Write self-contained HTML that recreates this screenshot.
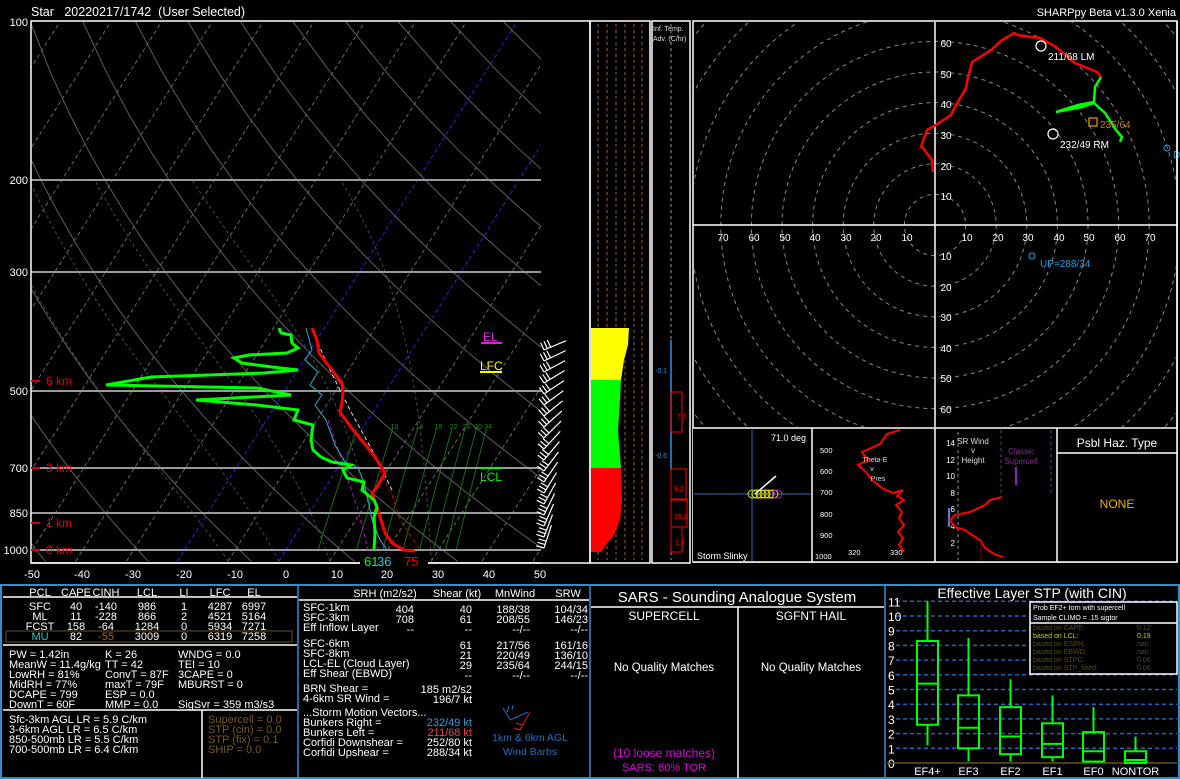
<!DOCTYPE html>
<html><head><meta charset="utf-8">
<style>
html,body{margin:0;padding:0;background:#000;width:1180px;height:779px;overflow:hidden}
svg{display:block}
text{font-family:"Liberation Sans",sans-serif}
</style></head><body>
<svg id="s" width="1180" height="779" viewBox="0 0 1180 779" xmlns="http://www.w3.org/2000/svg">
<rect width="1180" height="779" fill="#000"/>
<defs>
<clipPath id="skc"><rect x="31" y="21" width="510" height="542"/></clipPath>
<clipPath id="hc"><rect x="694" y="22" width="482" height="405"/></clipPath>
</defs>
<text x="31" y="16" fill="#fff" font-size="12.5">Star&#160;&#160; 20220217/1742&#160; (User Selected)</text>
<text x="1176" y="16" fill="#fff" font-size="11" text-anchor="end">SHARPpy Beta v1.3.0 Xenia</text>

<g id="skgrid" clip-path="url(#skc)"></g>
<g stroke="#9a9a9a" stroke-width="2">
<line x1="31" y1="180" x2="541" y2="180"/><line x1="31" y1="272" x2="541" y2="272"/>
<line x1="31" y1="391" x2="541" y2="391"/><line x1="31" y1="468" x2="541" y2="468"/>
<line x1="31" y1="513" x2="541" y2="513"/><line x1="31" y1="550" x2="541" y2="550"/>
</g>
<rect x="31" y="21" width="559" height="542" fill="none" stroke="#fff" stroke-width="1.5"/>
<g fill="#fff" font-size="11" text-anchor="end">
<text x="28" y="26">100</text><text x="28" y="184">200</text><text x="28" y="276">300</text>
<text x="28" y="395">500</text><text x="28" y="472">700</text><text x="28" y="517">850</text><text x="28" y="554">1000</text>
</g>
<g fill="#e00" font-size="12">
<line x1="31" y1="381" x2="40" y2="381" stroke="#c00" stroke-width="2"/><text x="46" y="385">6 km</text>
<line x1="31" y1="468" x2="40" y2="468" stroke="#c00" stroke-width="2"/><text x="46" y="472">3 km</text>
<line x1="31" y1="523" x2="40" y2="523" stroke="#c00" stroke-width="2"/><text x="46" y="527">1 km</text>
<line x1="31" y1="550" x2="40" y2="550" stroke="#c00" stroke-width="2"/><text x="46" y="554">0 km</text>
</g>
<g fill="#fff" font-size="11" text-anchor="middle">
<text x="32" y="578">-50</text><text x="82" y="578">-40</text><text x="133" y="578">-30</text><text x="184" y="578">-20</text>
<text x="235" y="578">-10</text><text x="286" y="578">0</text><text x="337" y="578">10</text><text x="387" y="578">20</text>
<text x="438" y="578">30</text><text x="489" y="578">40</text><text x="540" y="578">50</text>
</g>
<g clip-path="url(#skc)">
<polyline fill="none" stroke="#d000d0" stroke-width="1" stroke-dasharray="4,3" points="328,420 345,470 358,510 368,550"/>
<polyline fill="none" stroke="#ddd" stroke-width="1" stroke-dasharray="4,3" points="312,330 330,370 350,410 372,450 392,490"/>
<polyline fill="none" stroke="#c00" stroke-width="1" stroke-dasharray="4,3" points="380,470 392,495 400,520 420,550"/>
<polyline fill="none" stroke="#22b5cc" stroke-width="1" points="306,328 312,350 305,360 318,372 310,385 322,395 315,405 326,420 335,445 345,462 358,468 363,480 368,500 372,520 380,540 387,550"/>
<polyline fill="none" stroke="#f00" stroke-width="3" points="312,328 317,340 319,353 332,370 342,383 343,393 342,403 340,412 353,430 364,443 375,457 385,473 377,487 372,493 377,507 381,520 385,533 392,543 404,550 415,551"/>
<polyline fill="none" stroke="#0f0" stroke-width="3" points="279,328 281,333 291,335 292,343 298,348 287,353 249,355 234,358 242,363 272,367 298,370 264,373 151,377 106,385 257,388 291,395 196,400 257,405 298,410 294,420 313,425 311,440 313,450 321,457 332,462 351,465 343,470 347,478 364,482 362,490 374,500 377,507 374,517 375,533 374,550"/>
</g>
<line x1="31" y1="563" x2="541" y2="563" stroke="#fff" stroke-width="1.5"/>
<rect x="360" y="553" width="68" height="14" fill="#000"/>
<text x="364" y="566" fill="#0f0" font-size="13">61</text><text x="377" y="566" fill="#22c8d8" font-size="13">36</text><text x="404" y="566" fill="#f00" font-size="13">75</text>
<g font-size="12"><text x="483" y="341" fill="#e020e0">EL</text><line x1="481" y1="343" x2="502" y2="343" stroke="#e020e0" stroke-width="2"/>
<text x="480" y="370" fill="#ff0">LFC</text><line x1="480" y1="372" x2="502" y2="372" stroke="#ff0" stroke-width="2"/>
<line x1="480" y1="468" x2="502" y2="468" stroke="#0f0" stroke-width="2"/><text x="480" y="481" fill="#0f0">LCL</text></g>
<g id="barbs" stroke="#fff" stroke-width="1.2" fill="none"></g>

<rect x="590" y="21" width="60" height="542" fill="none" stroke="#fff" stroke-width="1.5"/>
<g stroke="#6a4020" stroke-width="1.5" stroke-dasharray="3,3">
<line x1="598" y1="24" x2="598" y2="560"/><line x1="607" y1="24" x2="607" y2="560"/><line x1="616" y1="24" x2="616" y2="560"/>
<line x1="625" y1="24" x2="625" y2="560"/><line x1="634" y1="24" x2="634" y2="560"/><line x1="642" y1="24" x2="642" y2="560"/>
</g>
<polygon fill="#ff0" points="591,328 629,328 628,345 624,360 621,380 591,380"/>
<polygon fill="#0f0" points="591,380 621,380 620,400 618,430 621,468 591,468"/>
<polygon fill="#f00" points="591,468 621,468 622,500 620,520 614,535 606,545 601,552 591,552"/>
<rect x="652" y="21" width="38" height="542" fill="none" stroke="#fff" stroke-width="1.5"/>
<text x="653" y="31" fill="#ddd" font-size="7">Inf. Temp.</text><text x="653" y="41" fill="#ddd" font-size="7">Adv. (C/hr)</text>
<line x1="671" y1="24" x2="671" y2="560" stroke="#999" stroke-dasharray="3,3"/>
<line x1="671" y1="340" x2="671" y2="470" stroke="#3090e0" stroke-width="1.5"/>
<text x="655" y="373" fill="#3090e0" font-size="7">-0.1</text><text x="655" y="458" fill="#3090e0" font-size="7">-0.6</text>
<g stroke="#f00" fill="none"><rect x="671" y="392" width="11" height="40"/><rect x="671" y="469" width="15" height="30"/><rect x="671" y="500" width="16" height="27"/><rect x="671" y="527" width="11" height="25"/></g>
<g fill="#f00" font-size="7"><text x="677" y="419">7.0</text><text x="674" y="491">9.2</text><text x="674" y="519">15.2</text><text x="675" y="545">3.7</text></g>

<rect x="693" y="21" width="484" height="541" fill="none" stroke="#fff" stroke-width="1.5"/>
<g id="rings" clip-path="url(#hc)" fill="none" stroke="#888" stroke-dasharray="4,4"></g>
<line x1="935" y1="22" x2="935" y2="427" stroke="#fff" stroke-width="1.5"/>
<line x1="693" y1="225" x2="1177" y2="225" stroke="#fff" stroke-width="1.5"/>
<g fill="#fff" font-size="10" text-anchor="middle">
<text x="946" y="47">60</text><text x="946" y="78">50</text><text x="946" y="108">40</text><text x="946" y="139">30</text><text x="946" y="170">20</text><text x="946" y="200">10</text>
<text x="946" y="260">10</text><text x="946" y="291">20</text><text x="946" y="321">30</text><text x="946" y="352">40</text><text x="946" y="382">50</text><text x="946" y="413">60</text>
<text x="723" y="241">70</text><text x="754" y="241">60</text><text x="785" y="241">50</text><text x="815" y="241">40</text><text x="846" y="241">30</text><text x="876" y="241">20</text><text x="907" y="241">10</text>
<text x="967" y="241">10</text><text x="998" y="241">20</text><text x="1028" y="241">30</text><text x="1059" y="241">40</text><text x="1089" y="241">50</text><text x="1120" y="241">60</text><text x="1150" y="241">70</text>
</g>
<polyline fill="none" stroke="#f00" stroke-width="2.5" points="933,172 932,160 923,148 921,147 927,130 934,126 951,115 955,107 966,88 968,77 972,62 991,50 1002,40 1014,33 1018,35 1031,37 1040,38 1056,47 1075,63 1097,72 1101,77"/>
<polyline fill="none" stroke="#0f0" stroke-width="2.5" points="1101,77 1095,87 1094,102 1078,105 1056,112 1082,107 1094,103 1105,113 1116,130 1122,137 1120,142"/>
<circle cx="1041" cy="46" r="5" fill="none" stroke="#fff" stroke-width="1.2"/><text x="1048" y="60" fill="#fff" font-size="10">211/68 LM</text>
<circle cx="1053" cy="134" r="5" fill="none" stroke="#fff" stroke-width="1.2"/><text x="1060" y="148" fill="#fff" font-size="10">232/49 RM</text>
<rect x="1089" y="118" width="8" height="8" fill="none" stroke="#c08010" stroke-width="1.5"/><text x="1100" y="128" fill="#c08010" font-size="10">235/64</text>
<circle cx="1167" cy="148" r="3" fill="none" stroke="#1ea0e0"/><text x="1173" y="158" fill="#1ea0e0" font-size="10">D</text>
<circle cx="1032" cy="256" r="3" fill="none" stroke="#1ea0e0"/><text x="1040" y="267" fill="#1ea0e0" font-size="10">UP=288/34</text>

<rect x="693" y="428" width="484" height="134" fill="#000"/>
<line x1="693" y1="428" x2="1177" y2="428" stroke="#fff" stroke-width="1.5"/>
<line x1="812" y1="428" x2="812" y2="562" stroke="#fff" stroke-width="1.5"/>
<line x1="935" y1="428" x2="935" y2="562" stroke="#fff" stroke-width="1.5"/>
<line x1="1057" y1="428" x2="1057" y2="562" stroke="#fff" stroke-width="1.5"/>
<line x1="1057" y1="453" x2="1177" y2="453" stroke="#fff" stroke-width="1.5"/>
<line x1="1177" y1="21" x2="1177" y2="562" stroke="#fff" stroke-width="1.5"/>
<line x1="693" y1="562" x2="1177" y2="562" stroke="#fff" stroke-width="1.5"/>
<line x1="752" y1="430" x2="752" y2="561" stroke="#1a4a80" stroke-width="1.5"/>
<line x1="694" y1="494" x2="811" y2="494" stroke="#1a4a80" stroke-width="1.5"/>
<text x="806" y="441" fill="#fff" font-size="9" text-anchor="end">71.0 deg</text>
<g fill="none" stroke="#dd0" stroke-width="1"><ellipse cx="753" cy="494" rx="5" ry="4"/><ellipse cx="757" cy="494" rx="5" ry="4"/><ellipse cx="761" cy="494" rx="5" ry="4"/><ellipse cx="765" cy="494" rx="5" ry="4"/><ellipse cx="769" cy="494" rx="5" ry="4"/><ellipse cx="773" cy="494" rx="5" ry="4"/></g>
<ellipse cx="777" cy="494" rx="5" ry="4" fill="none" stroke="#b020d0"/>
<line x1="755" y1="494" x2="776" y2="476" stroke="#fff" stroke-width="1.5"/>
<text x="697" y="559" fill="#fff" font-size="9">Storm Slinky</text>
<g fill="#fff" font-size="7.5"><text x="820" y="453">500</text><text x="820" y="474">600</text><text x="820" y="495">700</text><text x="820" y="517">800</text><text x="820" y="538">900</text><text x="815" y="559">1000</text>
<text x="848" y="555">320</text><text x="890" y="555">330</text></g>
<polyline fill="none" stroke="#f00" stroke-width="2" points="900,430 887,434 880,444 862,452 868,460 858,465 866,472 872,480 882,488 893,493 903,490 897,496 904,500 896,505 902,512 899,518 904,525 898,532 903,538 899,545 904,552"/>
<g fill="#ddd" font-size="7" text-anchor="middle"><text x="875" y="462">Theta-E</text><text x="872" y="471">v</text><text x="878" y="481">Pres</text></g>
<line x1="958" y1="432" x2="958" y2="560" stroke="#999" stroke-dasharray="3,3"/>
<g fill="#fff" font-size="8" text-anchor="end"><text x="955" y="446">14</text><text x="955" y="463">12</text><text x="955" y="479">10</text><text x="955" y="496">8</text><text x="955" y="512">6</text><text x="955" y="529">4</text><text x="955" y="546">2</text></g>
<g fill="#ddd" font-size="8" text-anchor="middle"><text x="973" y="444">SR Wind</text><text x="973" y="453">v</text><text x="973" y="463">Height</text></g>
<g stroke="#7a2a90" stroke-dasharray="3,3"><line x1="1001" y1="430" x2="1001" y2="493"/><line x1="1051" y1="430" x2="1051" y2="493"/></g>
<text x="1021" y="454" fill="#8a2aa0" font-size="8" text-anchor="middle">Classic</text><text x="1021" y="464" fill="#8a2aa0" font-size="8" text-anchor="middle">Supercell</text>
<line x1="1016" y1="467" x2="1016" y2="485" stroke="#9020c0" stroke-width="2"/>
<line x1="949" y1="508" x2="949" y2="527" stroke="#5080e0" stroke-width="2"/>
<polyline fill="none" stroke="#f00" stroke-width="2" points="1002,497 990,500 985,505 970,512 955,515 950,520 955,527 965,530 972,535 980,540 985,548 996,555 1003,557"/>
<line x1="981" y1="542" x2="981" y2="561" stroke="#800"/>
<text x="1117" y="447" fill="#fff" font-size="12" text-anchor="middle">Psbl Haz. Type</text>
<text x="1117" y="508" fill="#f0b000" font-size="12" text-anchor="middle">NONE</text>

<rect x="1" y="585" width="1178" height="193" fill="#000" stroke="#2f8fcc" stroke-width="2"/>
<line x1="298" y1="586" x2="298" y2="778" stroke="#2f8fcc" stroke-width="1.5"/>
<line x1="590" y1="586" x2="590" y2="778" stroke="#2f8fcc" stroke-width="1.5"/>
<line x1="885" y1="586" x2="885" y2="778" stroke="#2f8fcc" stroke-width="1.5"/>
<g stroke="#fff" stroke-width="1.5">
<line x1="3" y1="597" x2="297" y2="597"/><line x1="3" y1="645" x2="297" y2="645"/><line x1="3" y1="710" x2="297" y2="710"/>
<line x1="202" y1="710" x2="202" y2="778"/><line x1="299" y1="600" x2="589" y2="600"/>
<line x1="591" y1="607" x2="884" y2="607"/><line x1="738" y1="607" x2="738" y2="778"/>
</g>
<g fill="#fff" font-size="11" text-anchor="middle">
<text x="40" y="596">PCL</text><text x="76" y="596">CAPE</text><text x="106" y="596">CINH</text><text x="147" y="596">LCL</text><text x="184" y="596">LI</text><text x="220" y="596">LFC</text><text x="254" y="596">EL</text>
<text x="40" y="610">SFC</text><text x="76" y="610">40</text><text x="106" y="610">-140</text><text x="147" y="610">986</text><text x="184" y="610">1</text><text x="220" y="610">4287</text><text x="254" y="610">6997</text>
<text x="40" y="620">ML</text><text x="76" y="620">11</text><text x="106" y="620">-228</text><text x="147" y="620">866</text><text x="184" y="620">2</text><text x="220" y="620">4521</text><text x="254" y="620">5164</text>
<text x="40" y="630">FCST</text><text x="76" y="630">158</text><text x="106" y="630">-64</text><text x="147" y="630">1284</text><text x="184" y="630">0</text><text x="220" y="630">5934</text><text x="254" y="630">7271</text>
<text x="40" y="640" fill="#22c8d8">MU</text><text x="76" y="640">82</text><text x="106" y="640" fill="#9a6a10">-55</text><text x="147" y="640">3009</text><text x="184" y="640">0</text><text x="220" y="640">6319</text><text x="254" y="640">7258</text>
</g>
<rect x="6" y="631" width="286" height="11" fill="none" stroke="#6a4a1a"/>
<g fill="#fff" font-size="11">
<text x="9" y="658">PW = 1.42in</text><text x="105" y="658">K = 26</text><text x="178" y="658">WNDG = 0.0</text>
<text x="9" y="668">MeanW = 11.4g/kg</text><text x="105" y="668">TT = 42</text><text x="178" y="668">TEI = 10</text>
<text x="9" y="678">LowRH = 81%</text><text x="105" y="678">ConvT = 87F</text><text x="178" y="678">3CAPE = 0</text>
<text x="9" y="688">MidRH = 77%</text><text x="105" y="688">maxT = 79F</text><text x="178" y="688">MBURST = 0</text>
<text x="9" y="698">DCAPE = 799</text><text x="105" y="698">ESP = 0.0</text>
<text x="9" y="708">DownT = 60F</text><text x="105" y="708">MMP = 0.0</text><text x="178" y="708">SigSvr = 359 m3/s3</text>
<text x="9" y="723">Sfc-3km AGL LR = 5.9 C/km</text><text x="9" y="733">3-6km AGL LR = 6.5 C/km</text>
<text x="9" y="743">850-500mb LR = 5.5 C/km</text><text x="9" y="753">700-500mb LR = 6.4 C/km</text>
</g>
<g fill="#7a5a1a" font-size="11"><text x="208" y="723">Supercell = 0.0</text><text x="208" y="733">STP (cin) = 0.0</text><text x="208" y="743">STP (fix) = 0.1</text><text x="208" y="753">SHIP = 0.0</text></g>
<g fill="#fff" font-size="11">
<text x="385" y="597" text-anchor="middle">SRH (m2/s2)</text><text x="457" y="597" text-anchor="middle">Shear (kt)</text><text x="515" y="597" text-anchor="middle">MnWind</text><text x="568" y="597" text-anchor="middle">SRW</text>
<text x="303" y="611">SFC-1km</text><text x="303" y="621">SFC-3km</text><text x="303" y="631">Eff Inflow Layer</text>
<text x="303" y="647">SFC-6km</text><text x="303" y="657">SFC-8km</text><text x="303" y="667">LCL-EL (Cloud Layer)</text><text x="303" y="677">Eff Shear (EBWD)</text>
<text x="303" y="692">BRN Shear =</text><text x="303" y="702">4-6km SR Wind =</text>
<text x="303" y="716">...Storm Motion Vectors...</text><text x="303" y="726">Bunkers Right =</text><text x="303" y="736">Bunkers Left =</text><text x="303" y="746">Corfidi Downshear =</text><text x="303" y="756">Corfidi Upshear =</text>
</g>
<g fill="#fff" font-size="11" text-anchor="end">
<text x="414" y="613">404</text><text x="472" y="613">40</text><text x="530" y="613">188/38</text><text x="588" y="613">104/34</text>
<text x="414" y="623">708</text><text x="472" y="623">61</text><text x="530" y="623">208/55</text><text x="588" y="623">146/23</text>
<text x="414" y="633">--</text><text x="472" y="633">--</text><text x="530" y="633">--/--</text><text x="588" y="633">--/--</text>
<text x="472" y="649">61</text><text x="530" y="649">217/56</text><text x="588" y="649">161/16</text>
<text x="472" y="659">21</text><text x="530" y="659">220/49</text><text x="588" y="659">136/10</text>
<text x="472" y="669">29</text><text x="530" y="669">235/64</text><text x="588" y="669">244/15</text>
<text x="472" y="679">--</text><text x="530" y="679">--/--</text><text x="588" y="679">--/--</text>
<text x="472" y="693">185 m2/s2</text><text x="472" y="703">196/7 kt</text>
<text x="472" y="726" fill="#22a0e0">232/49 kt</text><text x="472" y="736" fill="#ff4040">211/68 kt</text><text x="472" y="746">252/80 kt</text><text x="472" y="756">288/34 kt</text>
</g>
<g fill="none" stroke-width="1"><polyline points="503,708 510,720 528,712" stroke="#1e6fc0"/><line x1="507" y1="712" x2="509" y2="706" stroke="#1e6fc0"/><line x1="512" y1="710" x2="513" y2="705" stroke="#1e6fc0"/>
<polyline points="530,712 520,730" stroke="#d02020"/><line x1="520" y1="730" x2="514" y2="728" stroke="#d02020"/><line x1="522" y1="725" x2="516" y2="723" stroke="#d02020"/></g>
<text x="530" y="741" fill="#1e6fc0" font-size="10.5" text-anchor="middle">1km &amp; 6km AGL</text>
<text x="530" y="755" fill="#1e6fc0" font-size="10.5" text-anchor="middle">Wind Barbs</text>
<text x="737" y="602" fill="#fff" font-size="15" text-anchor="middle">SARS - Sounding Analogue System</text>
<text x="664" y="620" fill="#fff" font-size="12" text-anchor="middle">SUPERCELL</text><text x="811" y="620" fill="#fff" font-size="12" text-anchor="middle">SGFNT HAIL</text>
<text x="664" y="671" fill="#fff" font-size="11.5" text-anchor="middle">No Quality Matches</text><text x="811" y="671" fill="#fff" font-size="11.5" text-anchor="middle">No Quality Matches</text>
<text x="664" y="757" fill="#e000e0" font-size="12" text-anchor="middle">(10 loose matches)</text>
<text x="664" y="771" fill="#e000e0" font-size="11" text-anchor="middle">SARS: 60% TOR</text>
<text x="1032" y="598" fill="#fff" font-size="14" text-anchor="middle">Effective Layer STP (with CIN)</text>
<g id="stp"></g>
<rect x="1030" y="602" width="147" height="72" fill="#000" stroke="#fff" stroke-width="1.5"/>
<line x1="1030" y1="623" x2="1177" y2="623" stroke="#fff" stroke-width="1.5"/>
<g font-size="7"><text x="1033" y="610" fill="#fff">Prob EF2+ torn with supercell</text><text x="1033" y="620" fill="#fff">Sample CLIMO = .15 sigtor</text>
<text x="1033" y="630" fill="#5a4a1a">based on CAPE:</text><text x="1137" y="630" fill="#5a4a1a">0.12</text>
<text x="1033" y="638" fill="#d0d000">based on LCL:</text><text x="1137" y="638" fill="#d0d000">0.19</text>
<text x="1033" y="646" fill="#5a4a1a">based on ESRH:</text><text x="1137" y="646" fill="#5a4a1a">nan</text>
<text x="1033" y="654" fill="#5a4a1a">based on EBWD:</text><text x="1137" y="654" fill="#5a4a1a">nan</text>
<text x="1033" y="662" fill="#5a4a1a">based on STPC:</text><text x="1137" y="662" fill="#5a4a1a">0.06</text>
<text x="1033" y="670" fill="#5a4a1a">based on STP_fixed:</text><text x="1137" y="670" fill="#5a4a1a">0.06</text></g>
</svg>
<script>
var NS="http://www.w3.org/2000/svg";
function el(p,t,a){var e=document.createElementNS(NS,t);for(var k in a)e.setAttribute(k,a[k]);p.appendChild(e);return e;}
function Y(p){return 22+528*Math.log10(p/100);}
function X(T,p){return 286+5.08*T+0.63*(550-Y(p));}
var g=document.getElementById('skgrid');
for(var T=-160;T<=50;T+=10){var blue=(T==0||T==-20);
 el(g,'line',{x1:X(T,1050),y1:Y(1050),x2:X(T,100),y2:Y(100),stroke:blue?'#2424d8':'#666','stroke-width':1,'stroke-dasharray':'4,3'});}
for(var th=224;th<=504;th+=20){var pts=[];for(var p=1050;p>=100;p-=25){var t=th*Math.pow(p/1000,0.286)-273.15;pts.push(X(t,p).toFixed(1)+','+Y(p).toFixed(1));}
 el(g,'polyline',{points:pts.join(' '),fill:'none',stroke:'#5e5e5e','stroke-width':1});}
function es(t){return 6.112*Math.exp(17.67*t/(t+243.5));}
[-10,0,10,20,30].forEach(function(t0){var t=t0,pts=[];for(var p=1050;p>=200;p-=10){pts.push(X(t,p).toFixed(1)+','+Y(p).toFixed(1));
 var T=t+273.15,ws=0.622*es(t)/(p-es(t)),L=2.5e6;var g1=(287*T+L*ws)/(1004+L*L*ws*0.622/(287*T*T));t-=g1/p*10;}
 el(g,'polyline',{points:pts.join(' '),fill:'none',stroke:'#4a4a4a','stroke-width':1,'stroke-dasharray':'3,3'});});
[6,10,14,18,22,26,30,34].forEach(function(w){var pts=[];for(var p=1000;p>=590;p-=10){var e=w*p/(622+w),l=Math.log(e/6.112),td=243.5*l/(17.67-l);pts.push(X(td,p).toFixed(1)+','+Y(p).toFixed(1));}
 el(g,'polyline',{points:pts.join(' '),fill:'none',stroke:'#1a6a1a','stroke-width':1});
 if(w>=10){var e=w*590/(622+w),l=Math.log(e/6.112),td=243.5*l/(17.67-l);var t=el(g,'text',{x:X(td,590)-2,y:Y(590),fill:'#1a8a1a','font-size':7});t.textContent=w;}});
var b=document.getElementById('barbs');
for(var y=344;y<=552;y+=11){var f=(y-344)/208;var ang=-0.4-f*0.9;var L=24;var x0=544,y0=y+6;
 var dx=Math.cos(ang)*L,dy=Math.sin(ang)*L;el(b,'line',{x1:x0,y1:y0,x2:x0+dx,y2:y0+dy});
 for(var k=0;k<3;k++){var px=x0+dx*(k*0.15),py=y0+dy*(k*0.15);var a2=ang-1.6;el(b,'line',{x1:px,y1:py,x2:px+Math.cos(a2)*8,y2:py+Math.sin(a2)*8});}}
var r=document.getElementById('rings');for(var k=1;k<=12;k++)el(r,'circle',{cx:935,cy:225,r:30.6*k});
var s=document.getElementById('stp');function sy(v){return 763-v*14.7;}
for(var i=1;i<=11;i++){el(s,'line',{x1:896,y1:sy(i),x2:1177,y2:sy(i),stroke:'#1e64b8','stroke-width':1.5,'stroke-dasharray':'4,3'});
 var t=el(s,'text',{x:888,y:sy(i)+5,fill:'#fff','font-size':12});t.textContent=i;}
var t0=el(s,'text',{x:888,y:768,fill:'#fff','font-size':12});t0.textContent='0';
el(s,'line',{x1:887,y1:763,x2:1177,y2:763,stroke:'#6a5020','stroke-width':1.5});
var bx=[['EF4+',917,1.2,11,2.6,8.3,5.4],['EF3',958,0.1,8.5,1,4.6,2.4],['EF2',1000,0.1,5.7,0.6,3.8,1.8],['EF1',1042,0.1,4.6,0.4,2.7,1.3],['EF0',1083,0.1,3.8,0.1,2.1,0.8],['NONTOR',1125,0,1.8,0,0.8,0.2]];
bx.forEach(function(d){var x=d[1],w=21,c=x+w/2;el(s,'line',{x1:c,y1:sy(d[2]),x2:c,y2:sy(d[4]),stroke:'#0f0','stroke-width':2});
 el(s,'line',{x1:c,y1:sy(d[5]),x2:c,y2:sy(d[3]),stroke:'#0f0','stroke-width':2});
 el(s,'rect',{x:x,y:sy(d[5]),width:w,height:sy(d[4])-sy(d[5]),fill:'none',stroke:'#0f0','stroke-width':2});
 el(s,'line',{x1:x,y1:sy(d[6]),x2:x+w,y2:sy(d[6]),stroke:'#0f0','stroke-width':2});
 var t=el(s,'text',{x:c,y:775,fill:'#fff','font-size':11,'text-anchor':'middle'});t.textContent=d[0];});
</script>
</body></html>
